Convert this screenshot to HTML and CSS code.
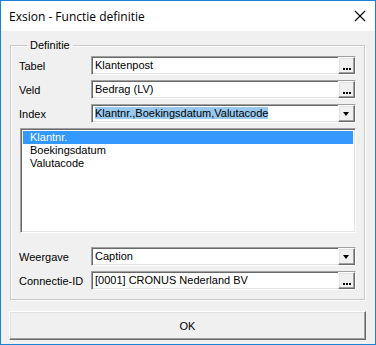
FILE: index.html
```html
<!DOCTYPE html>
<html lang="nl">
<head>
  <meta charset="UTF-8" />
  <title>Exsion - Functie definitie</title>
  <link rel="stylesheet" href="styles.css">
</head>
<body>
  <div class="window">
    <div class="titlebar">
      <span class="title">Exsion - Functie definitie</span>
      <svg class="close" width="12" height="12" viewBox="0 0 12 12">
        <path d="M1 1 L11 11 M11 1 L1 11" stroke="#000" stroke-width="1.1" fill="none" />
      </svg>
    </div>

    <div class="dialog">
      <fieldset class="group">
        <legend>Definitie</legend>

        <div class="row">
          <label>Tabel</label>
          <div class="field">
            <span class="value">Klantenpost</span>
            <span class="btn dots"><i></i><i></i><i></i></span>
          </div>
        </div>

        <div class="row">
          <label>Veld</label>
          <div class="field">
            <span class="value">Bedrag (LV)</span>
            <span class="btn dots"><i></i><i></i><i></i></span>
          </div>
        </div>

        <div class="row">
          <label>Index</label>
          <div class="field">
            <span class="value"><span class="sel">Klantnr.,Boekingsdatum,Valutacode</span></span>
            <span class="btn arrow"><i></i></span>
          </div>
        </div>

        <ul class="list">
          <li class="active">Klantnr.</li>
          <li>Boekingsdatum</li>
          <li>Valutacode</li>
        </ul>

        <div class="row spaced">
          <label>Weergave</label>
          <div class="field">
            <span class="value">Caption</span>
            <span class="btn arrow"><i></i></span>
          </div>
        </div>

        <div class="row">
          <label>Connectie-ID</label>
          <div class="field">
            <span class="value">[0001] CRONUS Nederland BV</span>
            <span class="btn dots"><i></i><i></i><i></i></span>
          </div>
        </div>
      </fieldset>

      <button class="ok">OK</button>
    </div>
  </div>
</body>
</html>
```

FILE: styles.css
```css
body {
  margin: 0;
  font-family: 'Liberation Sans', Arial, sans-serif;
  font-size: 11px;
  color: #000;
}

.window {
  width: 376px;
  height: 345px;
  box-sizing: border-box;
  border: 1px solid #1883d7;
  background: #f0f0f0;
  display: flex;
  flex-direction: column;
}

.titlebar {
  height: 30px;
  background: #fff;
  display: flex;
  align-items: center;
  justify-content: space-between;
  padding: 0 9px 0 8px;
}

.title {
  font-family: 'Open Sans', 'Noto Sans', sans-serif;
  font-size: 12px;
  color: #000;
}

.close {
  display: block;
}

.dialog {
  padding: 8px 9px 0 8px;
}

/* ===== GROUP BOX ===== */
.group {
  margin: 0 1px 0 1px;
  padding: 4px 8px 9px 8px;
  border: 1px solid #c9c9c9;
  box-shadow: inset 1px 1px 0 #fff, 1px 1px 0 #fff;
}

.group legend {
  padding: 0 3px;
  margin-left: 8px;
  line-height: 13px;
}

.row {
  display: flex;
  align-items: center;
  height: 19px;
  margin-bottom: 5px;
}

.row:last-child { margin-bottom: 0; }

.row.spaced { margin-top: 14px; }

.row label {
  width: 72px;
  flex-shrink: 0;
}

/* sunken edit box */
.field {
  flex: 1;
  height: 19px;
  box-sizing: border-box;
  display: flex;
  background: #fff;
  border: 1px solid;
  border-color: #a0a0a0 #fff #fff #a0a0a0;
  box-shadow: inset 1px 1px 0 #696969, inset -1px -1px 0 #e3e3e3;
  padding: 1px 1px 1px 2px;
}

.field .value {
  flex: 1;
  line-height: 15px;
  padding-left: 1px;
  white-space: nowrap;
  overflow: hidden;
}

.sel {
  background: #99c9ef;
}

/* raised little button */
.btn {
  width: 17px;
  height: 17px;
  margin: -1px -1px -1px 0;
  box-sizing: border-box;
  background: #f0f0f0;
  border: 1px solid;
  border-color: #fff #696969 #696969 #fff;
  box-shadow: inset -1px -1px 0 #a0a0a0, inset 1px 1px 0 #e3e3e3;
  position: relative;
}

.btn.dots {
  display: flex;
  align-items: flex-end;
  justify-content: center;
  gap: 1px;
  padding-bottom: 3px;
}

.btn.dots i {
  width: 2px;
  height: 2px;
  background: #000;
}

.btn.arrow i {
  position: absolute;
  left: 4px;
  top: 6px;
  width: 0;
  height: 0;
  border-left: 3.5px solid transparent;
  border-right: 3.5px solid transparent;
  border-top: 4px solid #000;
}

/* list box */
.list {
  list-style: none;
  margin: 0 0 0 1px;
  padding: 2px 2px;
  height: 105px;
  box-sizing: border-box;
  background: #fff;
  border: 1px solid;
  border-color: #a0a0a0 #fff #fff #a0a0a0;
  box-shadow: inset 1px 1px 0 #696969, inset -1px -1px 0 #e3e3e3;
}

.list li {
  height: 13px;
  line-height: 13px;
  padding-left: 7px;
}

.list li.active {
  background: #3399ff;
  color: #fff;
}

/* OK button */
.ok {
  display: block;
  width: 100%;
  height: 29px;
  margin-top: 11px;
  font-family: 'Liberation Sans', Arial, sans-serif;
  font-size: 11px;
  color: #000;
  background: #f0f0f0;
  border: 1px solid;
  border-color: #fff #696969 #696969 #fff;
  box-shadow: inset -1px -1px 0 #a0a0a0, inset 1px 1px 0 #e3e3e3;
}
```
